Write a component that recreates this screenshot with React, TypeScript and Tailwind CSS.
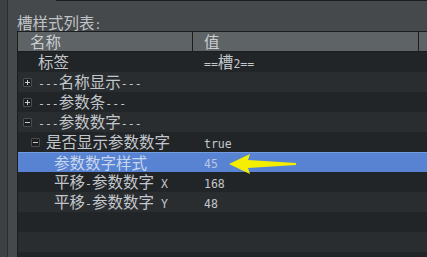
import React from "react";

type Row = {
  depth: number;
  name: string;
  value?: string;
  toggle?: "plus" | "minus";
  selected?: boolean;
};

const rows: Row[] = [
  { depth: 0, name: "标签", value: "==槽2==" },
  { depth: 0, name: "---名称显示---", toggle: "plus" },
  { depth: 0, name: "---参数条---", toggle: "plus" },
  { depth: 0, name: "---参数数字---", toggle: "minus" },
  { depth: 1, name: "是否显示参数数字", value: "true", toggle: "minus" },
  { depth: 2, name: "参数数字样式", value: "45", selected: true },
  { depth: 2, name: "平移-参数数字 X", value: "168" },
  { depth: 2, name: "平移-参数数字 Y", value: "48" },
  { depth: 0, name: "" },
  { depth: 0, name: "" },
  { depth: 0, name: "" },
];

const indent = ["pl-[5px]", "pl-[13px]", "pl-[21px]"];

// CJK runs get the bigger glyphs, latin stays small mono
function Txt({ text }: { text: string }) {
  const parts = text.split(/([\u3000-\u9fff\uff00-\uffef]+)/).filter(Boolean);
  return (
    <span className="whitespace-pre">
      {parts.map((p, i) =>
        /[\u3000-\u9fff\uff00-\uffef]/.test(p) ? (
          <span key={i} className="font-['Noto_Sans_CJK_SC',sans-serif] text-[15.5px]">
            {p}
          </span>
        ) : (
          <span key={i} className="font-['DejaVu_Sans_Mono',monospace] text-[11.5px]">
            {p}
          </span>
        )
      )}
    </span>
  );
}

function Toggle({ kind }: { kind?: "plus" | "minus" }) {
  if (!kind) return <div className="w-[9px] shrink-0" />;
  return (
    <div className="relative h-[9px] w-[9px] shrink-0 rounded-[1px] border border-[#4a4e51] bg-[#1c1e20]">
      <div className="absolute left-[1px] top-[3px] h-[1px] w-[5px] bg-[#c8cccf]" />
      {kind === "plus" && <div className="absolute left-[3px] top-[1px] h-[5px] w-[1px] bg-[#c8cccf]" />}
    </div>
  );
}

export default function App() {
  return (
    <div className="flex h-[257px] w-[427px] overflow-hidden bg-[#45494b] leading-none text-[#c3c7cb]">
      <div className="w-[8px] shrink-0 border-r border-[#2a2c2e] bg-[#3d4042]" />
      <div className="flex min-w-0 flex-1 flex-col">
        <div className="ml-[48px] flex h-[2px] border-b border-l border-[#1b1d1f]">
          <div className="w-[48px] border-r border-[#1b1d1f]" />
        </div>
        <div className="ml-[9px] mt-[15px] flex h-[15px] items-center text-[#c0c4c7]">
          <Txt text="槽样式列表:" />
        </div>
        <div className="ml-[9px] flex flex-1 flex-col border-l border-t border-[#1b1d1f]">
          <div className="flex h-[20px] shrink-0 border-b border-[#1b1d1f] bg-[#5e6366] text-[#c9cdd0]">
            <div className="flex w-[175px] items-center border-r border-[#1b1d1f] pl-[12px]">
              <Txt text="名称" />
            </div>
            <div className="flex w-[226px] items-center border-r border-[#1b1d1f] pl-[11px]">
              <Txt text="值" />
            </div>
            <div className="flex-1" />
          </div>
          {rows.map((r, i) => (
            <div
              key={i}
              className={
                r.selected
                  ? "relative flex h-[20px] shrink-0 border-t border-[#729be2] bg-[#5783d2] text-[#c9d6ee]"
                  : i % 2 === 0
                  ? "flex h-[20px] shrink-0 bg-[#222527]"
                  : "flex h-[20px] shrink-0 bg-[#2a2d30]"
              }
            >
              <div className={`flex w-[175px] items-center gap-[6px] ${indent[r.depth]}`}>
                <Toggle kind={r.toggle} />
                <Txt text={r.name} />
              </div>
              <div className={r.selected ? "flex items-center pl-[11px] text-[#b9c6e0]" : "flex items-center pl-[11px]"}>
                {r.value && <Txt text={r.value} />}
              </div>
              {r.selected && (
                <svg className="absolute left-[211px] top-[1px]" width="70" height="20" viewBox="0 0 70 20">
                  <polygon points="0,10 21,0 19,6 67,9 67,11 19,14 21,20" fill="#f6ee00" />
                </svg>
              )}
            </div>
          ))}
        </div>
      </div>
    </div>
  );
}
